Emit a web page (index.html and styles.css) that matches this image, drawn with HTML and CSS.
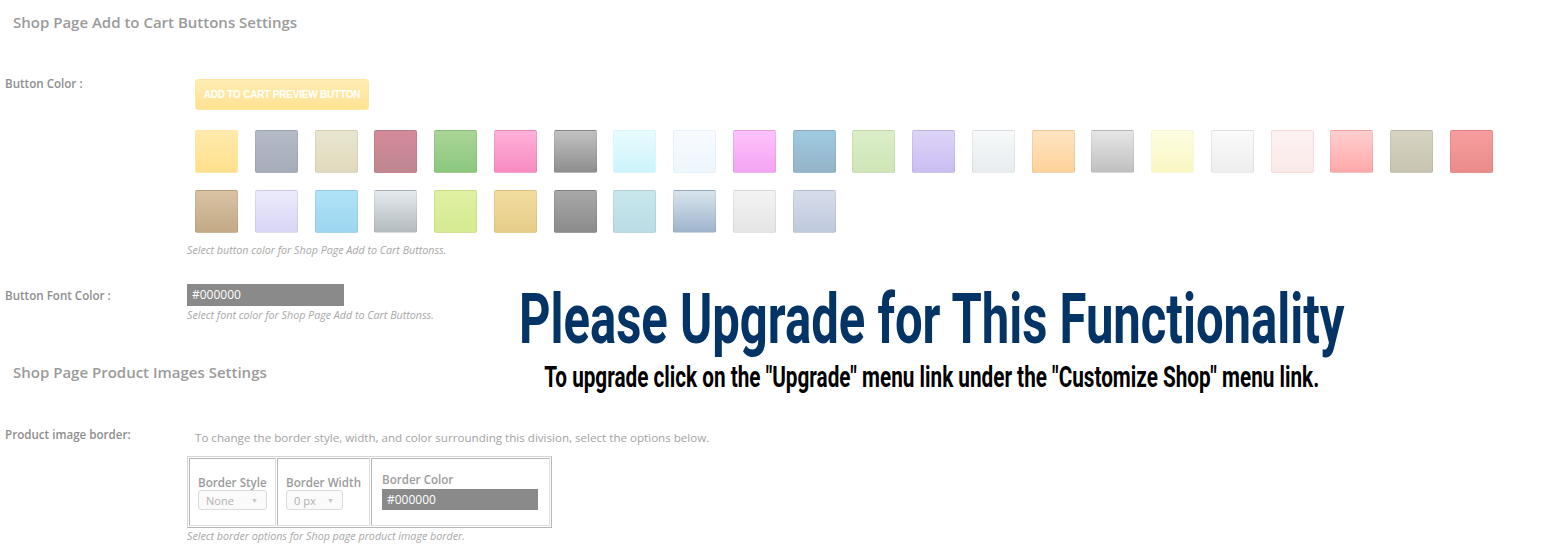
FILE: index.html
```html
<!DOCTYPE html>
<html>
<head>
<meta charset="utf-8">
<link rel="stylesheet" href="styles.css">
</head>
<body>
<div class="page">
  <h3 class="section-title">Shop Page Add to Cart Buttons Settings</h3>

  <div class="row row-color">
    <div class="label">Button Color :</div>
    <div class="field">
      <div class="preview-btn">ADD TO CART PREVIEW BUTTON</div>
      <div class="swatches">
        <span class="sw s1"></span><span class="sw s2"></span><span class="sw s3"></span><span class="sw s4"></span><span class="sw s5"></span><span class="sw s6"></span><span class="sw s7"></span><span class="sw s8"></span><span class="sw s9"></span><span class="sw s10"></span><span class="sw s11"></span><span class="sw s12"></span><span class="sw s13"></span><span class="sw s14"></span><span class="sw s15"></span><span class="sw s16"></span><span class="sw s17"></span><span class="sw s18"></span><span class="sw s19"></span><span class="sw s20"></span><span class="sw s21"></span><span class="sw s22"></span>
        <span class="sw t1"></span><span class="sw t2"></span><span class="sw t3"></span><span class="sw t4"></span><span class="sw t5"></span><span class="sw t6"></span><span class="sw t7"></span><span class="sw t8"></span><span class="sw t9"></span><span class="sw t10"></span><span class="sw t11"></span>
      </div>
      <p class="hint hint-swatch">Select button color for Shop Page Add to Cart Buttonss.</p>
    </div>
  </div>

  <div class="row row-font">
    <div class="label">Button Font Color :</div>
    <div class="field">
      <div class="color-input">#000000</div>
      <p class="hint">Select font color for Shop Page Add to Cart Buttonss.</p>
    </div>
  </div>

  <h3 class="section-title second">Shop Page Product Images Settings</h3>

  <div class="row row-border">
    <div class="label">Product image border:</div>
    <div class="field">
      <p class="desc">To change the border style, width, and color surrounding this division, select the options below.</p>
      <table class="border-table">
        <tr>
          <td class="cell c1">
            <div class="cell-title">Border Style</div>
            <div class="select sel-style"><span>None</span><span class="arrow">&#9660;</span></div>
          </td>
          <td class="cell c2">
            <div class="cell-title">Border Width</div>
            <div class="select sel-width"><span>0 px</span><span class="arrow">&#9660;</span></div>
          </td>
          <td class="cell c3">
            <div class="cell-title">Border Color</div>
            <div class="color-input small">#000000</div>
          </td>
        </tr>
      </table>
      <p class="hint hint-table">Select border options for Shop page product image border.</p>
    </div>
  </div>

  <div class="upgrade">
    <div class="up-title"><span>Please Upgrade for This Functionality</span></div>
    <div class="up-sub"><span>To upgrade click on the "Upgrade" menu link under the "Customize Shop" menu link.</span></div>
  </div>
</div>
</body>
</html>
```

FILE: styles.css
```css
* { box-sizing: border-box; }
html, body { margin: 0; padding: 0; background: #fff; }
body { font-family: "Open Sans", "Liberation Sans", sans-serif; color: #8c8c8c; }
.page { position: relative; width: 1560px; height: 557px; overflow: hidden; }

.section-title {
  margin: 0;
  padding: 13px 0 0 13px;
  font-size: 15px;
  line-height: 18px;
  font-weight: 600;
  color: #9b9b9b;
}
.section-title.second { padding-top: 41px; }

.row { display: flex; }
.label {
  width: 187px;
  padding-left: 5px;
  font-size: 11.6px;
  line-height: 16px;
  font-weight: 600;
  color: #8e8e8e;
  flex: none;
}
.field { display: flex; flex-direction: column; align-items: flex-start; }

.row-color { margin-top: 45px; }
.preview-btn {
  margin: 3px 0 0 8px;
  width: 174px;
  height: 31px;
  border: 1px solid #ffe6a2;
  border-radius: 3px;
  background: linear-gradient(#ffedb3, #ffe292);
  color: #fff;
  font-family: "Liberation Sans", Arial, sans-serif;
  font-weight: 700;
  font-size: 10px;
  letter-spacing: -0.2px;
  line-height: 29px;
  text-align: center;
}
.swatches {
  margin: 20px 0 0 8px;
  display: grid;
  grid-template-columns: repeat(22, 43px);
  grid-auto-rows: 43px;
  column-gap: 16.76px;
  row-gap: 17px;
}
.sw { display: block; border-radius: 2px; border: 1px solid rgba(0,0,0,0.06); }
.s1 { background: linear-gradient(#ffeaad, #ffe08c); border-color: #ffe6a0; }
.s2 { background: linear-gradient(#b5bac7, #a7acbb); }
.s3 { background: linear-gradient(#e9e6d0, #e0d9bc); }
.s4 { background: linear-gradient(#d48a99, #be8790); }
.s5 { background: linear-gradient(#aad596, #8bc87e); }
.s6 { background: linear-gradient(#ffb1d9, #f78bc2); }
.s7 { background: linear-gradient(#c2c2c2, #8e8e8e); }
.s8 { background: linear-gradient(#e8fcff, #cdf3fb); border-color: #d8f6fd; }
.s9 { background: linear-gradient(#f8fbff, #edf6fc); border-color: #e6f0f7; }
.s10 { background: linear-gradient(#ffc2fc, #f3a4f2); }
.s11 { background: linear-gradient(#9ecbe1, #96b3c7); }
.s12 { background: linear-gradient(#dbeec8, #d0e5b7); }
.s13 { background: linear-gradient(#ddd4f7, #cabef2); }
.s14 { background: linear-gradient(#f7f9fa, #e7ecee); }
.s15 { background: linear-gradient(#ffe4c2, #fdd299); }
.s16 { background: linear-gradient(#e6e6e6, #c0c0c0); }
.s17 { background: linear-gradient(#fdfde2, #f9f7c4); border-color: #f8f6d4; }
.s18 { background: linear-gradient(#fafafa, #eeeeee); }
.s19 { background: linear-gradient(#fdf2f2, #fbe9e9); border-color: #f8dcdc; }
.s20 { background: linear-gradient(#ffcfcf, #ffa8a8); }
.s21 { background: linear-gradient(#d7d4c3, #c8c4b1); }
.s22 { background: linear-gradient(#f79e9e, #eb8b8b); }
.t1 { background: linear-gradient(#d9c3a3, #c3a985); }
.t2 { background: linear-gradient(#ecebfc, #d8d5f6); }
.t3 { background: linear-gradient(#b0e3f7, #9cd6f0); }
.t4 { background: linear-gradient(#e5eaef, #b3bbbf); }
.t5 { background: linear-gradient(#e0f1a3, #d5ea91); }
.t6 { background: linear-gradient(#f2dd9f, #e5cc89); }
.t7 { background: linear-gradient(#a8a8a8, #8b8b8b); }
.t8 { background: linear-gradient(#c8e7ed, #bbdce5); }
.t9 { background: linear-gradient(#d8e4ed, #9eb4cc); }
.t10 { background: linear-gradient(#f3f3f3, #e5e5e5); }
.t11 { background: linear-gradient(#d7ddeb, #bfc9dd); }

.hint {
  margin: 0;
  font-size: 10.7px;
  line-height: 13px;
  font-style: italic;
  color: #a8a8a8;
}
.hint-swatch { margin-top: 11px; }

.row-font { margin-top: 27px; }
.row-font .label { padding-top: 4px; }
.color-input {
  width: 157px;
  height: 22px;
  margin-top: 0;
  background: #8a8a8a;
  color: #fff;
  font-size: 12px;
  line-height: 22px;
  padding-left: 5px;
}
.row-font .hint { margin-top: 3px; }

.row-border { margin-top: 46px; }
.desc {
  margin: 3px 0 0 8px;
  font-size: 11.6px;
  line-height: 16px;
  color: #a3a3a3;
}
.border-table {
  margin-top: 10px;
  border: 1px solid #d6d6d6;
  border-right-color: #b5b5b5;
  border-bottom-color: #b5b5b5;
  border-collapse: separate;
  border-spacing: 1px;
  width: 365px;
  height: 72px;
}
.cell {
  border: 1px solid #b8b8b8;
  border-right-color: #dedede;
  border-bottom-color: #dedede;
  padding: 16px 0 0 8px;
  vertical-align: top;
}
.c1 { width: 87px; }
.c2 { width: 93px; }
.c3 { padding: 13px 10px 0 10px; }
.cell-title {
  font-size: 11.6px;
  line-height: 15px;
  font-weight: 600;
  color: #9c9c9c;
  white-space: nowrap;
}
.c3 .cell-title { line-height: 16px; }
.select {
  display: flex;
  justify-content: space-between;
  align-items: center;
  height: 20px;
  border: 1px solid #dcdcdc;
  border-radius: 3px;
  background: #fafafa;
  padding: 0 8px 0 7px;
  font-size: 11px;
  color: #b0b0b0;
}
.sel-style { width: 69px; }
.sel-width { width: 57px; }
.arrow { font-size: 7px; color: #c4c4c4; }
.color-input.small { width: 156px; height: 21px; line-height: 21px; margin-top: 1px; }
.hint-table { margin-top: 2px; }

.upgrade {
  position: absolute;
  left: 304px;
  right: 0;
  top: 284px;
  text-align: center;
}
.up-title span, .up-sub span { display: inline-block; white-space: nowrap; }
.up-title {
  height: 70px;
  font-family: Roboto, "Liberation Sans", sans-serif;
  font-weight: 700;
  font-size: 70px;
  line-height: 70px;
  color: #043466;
}
.up-title span { transform: scaleX(0.70); }
.up-sub {
  margin-top: 9px;
  font-family: Roboto, "Liberation Sans", sans-serif;
  font-weight: 700;
  font-size: 29px;
  line-height: 29px;
  color: #000;
}
.up-sub span { transform: scaleX(0.714); }
```
